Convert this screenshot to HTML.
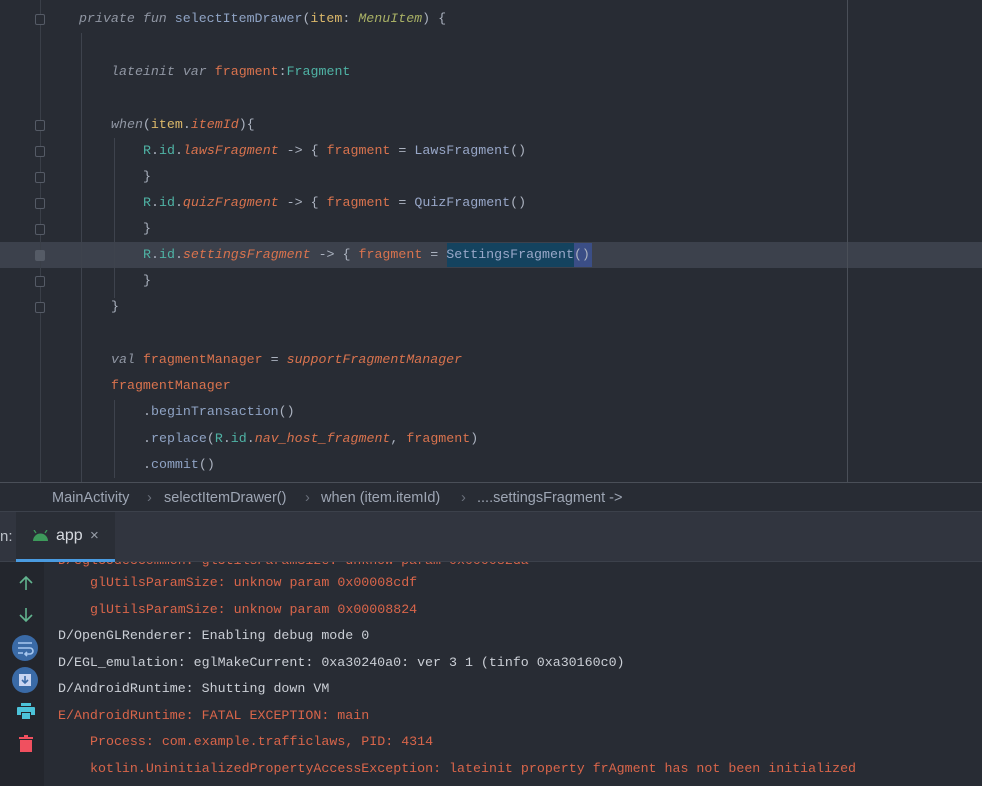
<!DOCTYPE html>
<html><head><meta charset="utf-8"><style>
*{margin:0;padding:0;box-sizing:border-box}
body{width:982px;height:786px;overflow:hidden;background:#282c34;font-family:"Liberation Mono",monospace;position:relative}
.ed{position:absolute;left:0;top:0;width:982px;height:482px;background:#282c34}
.ln{position:absolute;left:47px;font-size:13.3px;white-space:pre;color:#abb2bf;height:26px;line-height:26px}
.hl{position:absolute;left:0;top:242px;width:982px;height:26px;background:#3c414c}
.v{position:absolute;width:1px;background:#3e434d}
i{font-style:italic}
.kw{color:#9096a3;font-style:italic}
.fn{color:#8fa3c4}
.pa{color:#dbb86a}
.ty{color:#a8b065;font-style:italic}
.tl{color:#4fb3a5}
.or{color:#d9734e}
.oi{color:#d9734e;font-style:italic}
.cl{color:#98a7c8}
.g{color:#abb2bf}
.fold{position:absolute;left:35px;width:10px;height:11px;border:1px solid #555b66;border-radius:2px;background:#282c34}
.bc{position:absolute;left:0;top:482px;width:982px;height:29px;border-top:1px solid #4a4f58;background:#282c34;font-family:"Liberation Sans",sans-serif;font-size:14.5px;color:#9ea6b4}
.bc span{position:absolute;top:7px}
.tb{position:absolute;left:0;top:511px;width:982px;height:51px;background:#31353f;border-top:1px solid #3c414b;border-bottom:1px solid #3c414b}
.con{position:absolute;left:0;top:562px;width:982px;height:224px;background:#282c34}
.lb{position:absolute;left:0;top:562px;width:44px;height:224px;background:#23262d}
.cl2{position:absolute;font-size:13.3px;white-space:pre;line-height:26px;color:#cbcfd6}
.r{color:#d9654a}
</style></head><body>
<div class="ed">
<div class="hl"></div>
<div style="position:absolute;left:574px;top:243px;width:18px;height:24px;background:#3b4e86"></div>
<div style="position:absolute;left:447px;top:243px;width:127px;height:24px;background:#14435f"></div>
<div class="v" style="left:40px;top:0;height:482px;background:#3a3f48"></div>
<div class="v" style="left:81px;top:33px;height:449px"></div>
<div class="v" style="left:114px;top:138px;height:160px"></div>
<div class="v" style="left:114px;top:400px;height:78px"></div>
<div class="v" style="left:847px;top:0;height:482px;background:#4a4f58"></div>
<div class="fold" style="top:14px"></div>
<div class="fold" style="top:120px"></div>
<div class="fold" style="top:146px"></div>
<div class="fold" style="top:172px"></div>
<div class="fold" style="top:198px"></div>
<div class="fold" style="top:224px"></div>
<div class="fold" style="top:250px;background:#555b66"></div>
<div class="fold" style="top:276px"></div>
<div class="fold" style="top:302px"></div>
<div class="ln" style="top:6px;left:79px"><span class="kw">private fun</span> <span class="fn">selectItemDrawer</span>(<span class="pa">item</span>: <span class="ty">MenuItem</span>) {</div>
<div class="ln" style="top:59px;left:111px"><span class="kw">lateinit var</span> <span class="or">fragment</span>:<span class="tl">Fragment</span></div>
<div class="ln" style="top:112px;left:111px"><span class="kw">when</span>(<span class="pa">item</span>.<span class="oi">itemId</span>){</div>
<div class="ln" style="top:138px;left:143px"><span class="tl">R</span>.<span class="tl">id</span>.<span class="oi">lawsFragment</span> -&gt; { <span class="or">fragment</span> = <span class="cl">LawsFragment</span>()</div>
<div class="ln" style="top:164px;left:143px">}</div>
<div class="ln" style="top:190px;left:143px"><span class="tl">R</span>.<span class="tl">id</span>.<span class="oi">quizFragment</span> -&gt; { <span class="or">fragment</span> = <span class="cl">QuizFragment</span>()</div>
<div class="ln" style="top:216px;left:143px">}</div>
<div class="ln" style="top:242px;left:143px"><span class="tl">R</span>.<span class="tl">id</span>.<span class="oi">settingsFragment</span> -&gt; { <span class="or">fragment</span> = <span class="cl">SettingsFragment</span>()</div>
<div class="ln" style="top:268px;left:143px">}</div>
<div class="ln" style="top:294px;left:111px">}</div>
<div class="ln" style="top:347px;left:111px"><span class="kw">val</span> <span class="or">fragmentManager</span> = <span class="oi">supportFragmentManager</span></div>
<div class="ln" style="top:373px;left:111px"><span class="or">fragmentManager</span></div>
<div class="ln" style="top:399px;left:143px">.<span class="fn">beginTransaction</span>()</div>
<div class="ln" style="top:426px;left:143px">.<span class="fn">replace</span>(<span class="tl">R</span>.<span class="tl">id</span>.<span class="oi">nav_host_fragment</span>, <span class="or">fragment</span>)</div>
<div class="ln" style="top:452px;left:143px">.<span class="fn">commit</span>()</div>
</div>
<div class="bc">
<span style="left:52px">MainActivity</span><span style="left:147px;color:#6b717c">›</span>
<span style="left:164px">selectItemDrawer()</span><span style="left:305px;color:#6b717c">›</span>
<span style="left:321px">when (item.itemId)</span><span style="left:461px;color:#6b717c">›</span>
<span style="left:477px">....settingsFragment -&gt;</span>
</div>
<div class="tb">
<span style="position:absolute;left:0;top:16px;font-family:'Liberation Sans',sans-serif;font-size:15px;color:#bbc0c8">n:</span>
<div style="position:absolute;left:16px;top:0;width:99px;height:50px;background:#2a2e36"></div>
<div style="position:absolute;left:16px;top:47px;width:99px;height:3px;background:#4a9be0"></div>
<svg style="position:absolute;left:32px;top:18px" width="17" height="12" viewBox="0 0 17 12"><path d="M1 11 A7.5 7.5 0 0 1 16 11Z" fill="#3d9a5b"/><path d="M4 3 L2 0 M13 3 L15 0" stroke="#3d9a5b" stroke-width="1.3"/></svg>
<span style="position:absolute;left:56px;top:15px;font-family:'Liberation Sans',sans-serif;font-size:16px;color:#d5d8de">app</span>
<span style="position:absolute;left:90px;top:15px;font-family:'Liberation Sans',sans-serif;font-size:15px;color:#9aa0aa">×</span>
</div>
<div class="con"></div>
<div class="lb">
<svg style="position:absolute;left:18px;top:13px" width="16" height="16" viewBox="0 0 16 16"><path d="M8 15V2M2 8l6-6 6 6" stroke="#62b48f" stroke-width="1.6" fill="none"/></svg>
<svg style="position:absolute;left:18px;top:45px" width="16" height="16" viewBox="0 0 16 16"><path d="M8 1v13M2 8l6 6 6-6" stroke="#62b48f" stroke-width="1.6" fill="none"/></svg>
<svg style="position:absolute;left:11px;top:72px" width="28" height="28" viewBox="0 0 28 28"><circle cx="14" cy="14" r="13" fill="#3a6aa6"/><path d="M7 9h14M7 14h12a3 3 0 0 1 0 6h-4M7 19h5M16 18l-2 2 2 2" stroke="#a8c8f0" stroke-width="1.6" fill="none"/></svg>
<svg style="position:absolute;left:11px;top:104px" width="28" height="28" viewBox="0 0 28 28"><circle cx="14" cy="14" r="13" fill="#3a6aa6"/><rect x="8" y="8" width="12" height="12" fill="#c8d4f0"/><path d="M14 10v7M11 14l3 3 3-3" stroke="#3a6aa6" stroke-width="1.6" fill="none"/></svg>
<svg style="position:absolute;left:17px;top:141px" width="18" height="16" viewBox="0 0 18 16"><path d="M4 0h10v3H4z" fill="#4cc3d9"/><path d="M1 4h16a1 1 0 0 1 1 1v7h-4v-3H4v3H0V5a1 1 0 0 1 1-1z" fill="#4cc3d9"/><path d="M5 10h8v6H5z" fill="#4cc3d9"/></svg>
<svg style="position:absolute;left:19px;top:173px" width="14" height="17" viewBox="0 0 14 17"><rect x="0" y="2" width="14" height="2" fill="#f0505f"/><rect x="5" y="0" width="4" height="2" fill="#f0505f"/><rect x="1" y="5" width="12" height="12" fill="#f0505f"/></svg>
</div>
<div class="cl2 r" style="left:58px;top:548px;clip-path:inset(14px 0 0 0)">D/eglCodecCommon: glUtilsParamSize: unknow param 0x000082da</div>
<div class="cl2 r" style="left:90px;top:570px">glUtilsParamSize: unknow param 0x00008cdf</div>
<div class="cl2 r" style="left:90px;top:597px">glUtilsParamSize: unknow param 0x00008824</div>
<div class="cl2" style="left:58px;top:623px">D/OpenGLRenderer: Enabling debug mode 0</div>
<div class="cl2" style="left:58px;top:650px">D/EGL_emulation: eglMakeCurrent: 0xa30240a0: ver 3 1 (tinfo 0xa30160c0)</div>
<div class="cl2" style="left:58px;top:676px">D/AndroidRuntime: Shutting down VM</div>
<div class="cl2 r" style="left:58px;top:703px">E/AndroidRuntime: FATAL EXCEPTION: main</div>
<div class="cl2 r" style="left:90px;top:729px">Process: com.example.trafficlaws, PID: 4314</div>
<div class="cl2 r" style="left:90px;top:756px">kotlin.UninitializedPropertyAccessException: lateinit property frAgment has not been initialized</div>
</body></html>
